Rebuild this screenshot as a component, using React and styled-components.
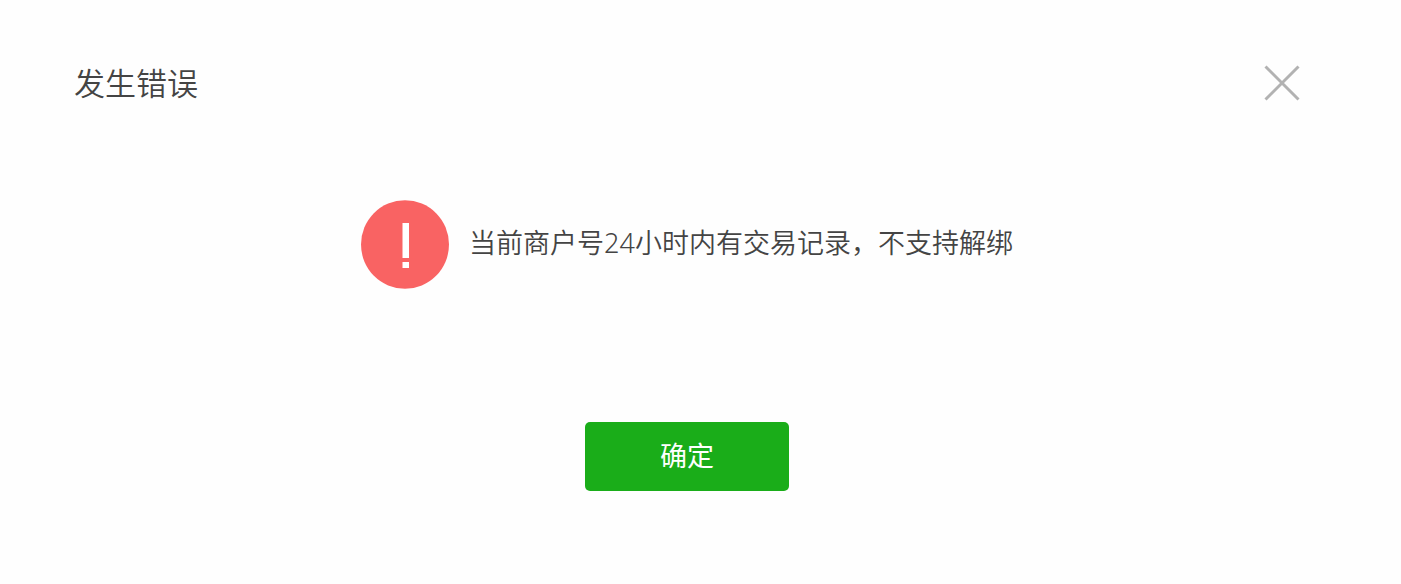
import React, { useState } from "react";
import styled, { createGlobalStyle } from "styled-components";

const GlobalStyle = createGlobalStyle`
  *, *::before, *::after {
    box-sizing: border-box;
  }
  body {
    margin: 0;
    background: #fefefe;
    color: #444;
    font-family: "Noto Sans", "Noto Sans CJK SC", sans-serif;
    font-weight: 350;
  }
`;

const Dialog = styled.section`
  display: flex;
  flex-direction: column;
  padding: 60px 101px 94px 74px;
`;

const Header = styled.header`
  display: flex;
  align-items: center;
  justify-content: space-between;
`;

const Title = styled.h1`
  margin: 0;
  font-size: 31px;
  line-height: 46px;
  font-weight: inherit;
`;

const CloseButton = styled.button`
  display: flex;
  padding: 0;
  border: 0;
  background: none;
  color: #b2b2b2;
  cursor: pointer;
`;

const Body = styled.div`
  display: flex;
  align-items: center;
  justify-content: center;
  gap: 20px;
  padding: 94px 0 133px;
`;

const WarnIcon = styled.svg`
  flex: none;
  width: 88px;
  height: 89px;
`;

const Message = styled.p`
  margin: 0;
  padding-bottom: 4px;
  font-size: 27px;
  line-height: 40px;
`;

const Footer = styled.footer`
  display: flex;
  justify-content: center;
`;

const PrimaryButton = styled.button`
  min-width: 204px;
  height: 69px;
  padding: 0 24px 4px;
  border: 0;
  border-radius: 5px;
  background: #1aad19;
  color: #fff;
  font: inherit;
  font-size: 27px;
  font-weight: 400;
  cursor: pointer;
`;

export default function App() {
  const [open, setOpen] = useState(true);
  const close = () => setOpen(false);

  return (
    <>
      <GlobalStyle />
      {open && (
        <Dialog role="alertdialog" aria-labelledby="title" aria-describedby="message">
          <Header>
            <Title id="title">发生错误</Title>
            <CloseButton type="button" aria-label="关闭" onClick={close}>
              <svg width="36" height="36" viewBox="0 0 36 36" fill="none" stroke="currentColor" strokeWidth="3">
                <path d="M1.500 1.500 34.500 34.500M34.500 1.500 1.500 34.500" />
              </svg>
            </CloseButton>
          </Header>
          <Body>
            <WarnIcon viewBox="0 0 88 89" aria-hidden="true">
              <ellipse cx="44" cy="44.500" rx="44" ry="44.300" fill="#f96363" />
              <path d="M41.500 23h6.500v35h-6.500zM41.500 62h6.500v6h-6.500z" fill="#fff" />
            </WarnIcon>
            <Message id="message">当前商户号24小时内有交易记录，不支持解绑</Message>
          </Body>
          <Footer>
            <PrimaryButton type="button" onClick={close}>确定</PrimaryButton>
          </Footer>
        </Dialog>
      )}
    </>
  );
}
